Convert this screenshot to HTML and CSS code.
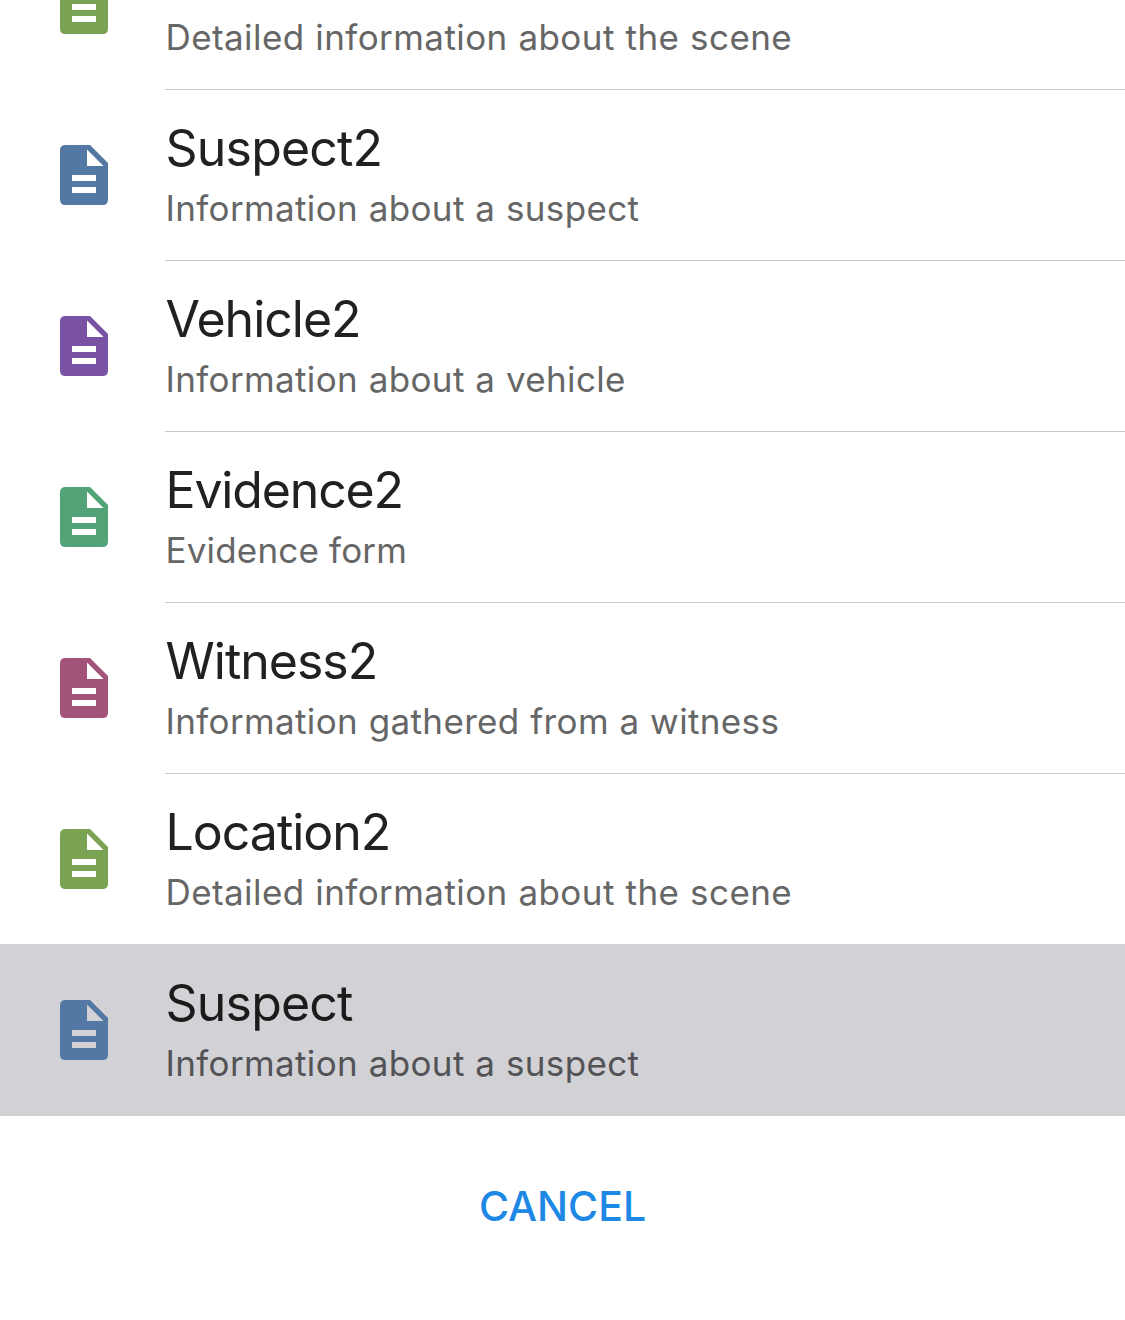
FILE: index.html
```html
<!DOCTYPE html>
<html lang="en">
<head>
<meta charset="utf-8">
<title>Forms</title>
<link rel="stylesheet" href="styles.css">
</head>
<body>
<svg class="defs" aria-hidden="true"><symbol id="doc" viewBox="0 0 48 60"><path fill-rule="evenodd" d="M5.500 0H30L48 18V54.500Q48 60 42.500 60H5.500Q0 60 0 54.500V5.500Q0 0 5.500 0ZM27 4.500V21H43.500ZM12 30V36H36V30ZM12 42V48H36V42Z"/></symbol></svg>
<main class="sheet">
<ul class="list">
<li class="row green partial"><svg class="icon"><use href="#doc"/></svg><div class="text"><p class="detail scene">Detailed information about the scene</p></div></li>
<li class="row blue"><svg class="icon"><use href="#doc"/></svg><div class="text"><h2 class="title wide">Suspect2</h2><p class="detail">Information about a suspect</p></div></li>
<li class="row purple"><svg class="icon"><use href="#doc"/></svg><div class="text"><h2 class="title">Vehicle2</h2><p class="detail">Information about a vehicle</p></div></li>
<li class="row teal"><svg class="icon"><use href="#doc"/></svg><div class="text"><h2 class="title tight">Evidence2</h2><p class="detail short">Evidence form</p></div></li>
<li class="row rose"><svg class="icon"><use href="#doc"/></svg><div class="text"><h2 class="title">Witness2</h2><p class="detail">Information gathered from a witness</p></div></li>
<li class="row green before-selected"><svg class="icon"><use href="#doc"/></svg><div class="text"><h2 class="title">Location2</h2><p class="detail scene">Detailed information about the scene</p></div></li>
<li class="row blue selected"><svg class="icon"><use href="#doc"/></svg><div class="text"><h2 class="title wide">Suspect</h2><p class="detail">Information about a suspect</p></div></li>
</ul>
<button class="cancel">CANCEL</button>
</main>
</body>
</html>
```
FILE: styles.css
```css
* { box-sizing: border-box; }
body { margin: 0; background: #fff; font-family: Inter, sans-serif; }
.defs { display: none; }
.sheet { height: 1320px; overflow: hidden; display: flex; flex-direction: column; }
.list { list-style: none; margin: 0; padding: 0; }
.row { height: 171px; display: flex; align-items: stretch; }
.icon { width: 48px; height: 60px; margin: 55px 57px 0 60px; flex: none; fill: currentColor; }
.text { flex: 1; border-bottom: 1px solid #c8c7cc; padding: 28px 0 0 0.5px; }
.title { margin: 0; font-size: 50px; line-height: 60px; font-weight: 400; letter-spacing: -1px; color: #212121; white-space: nowrap; }
.wide { letter-spacing: -0.8px; }
.tight { letter-spacing: -1.15px; }
.detail { margin: 8px 0 0; font-size: 35px; line-height: 44px; color: #666; letter-spacing: 0.36px; word-spacing: 0.4px; white-space: nowrap; }
.scene { letter-spacing: 0.42px; word-spacing: 0.5px; }
.short { letter-spacing: 0.18px; word-spacing: 0; }
.partial { height: 90px; }
.partial .icon { margin-top: -26px; }
.partial .text { padding-top: 7px; }
.partial .detail { margin-top: 8px; }
.blue { color: #5278a3; }
.purple { color: #7952a3; }
.teal { color: #52a378; }
.rose { color: #a35278; }
.green { color: #79a352; }
.before-selected { height: 170px; }
.selected { height: 172px; background: #d1d1d6; }
.selected .icon { margin-top: 56px; }
.selected .text { padding-top: 29px; }
.selected .text, .before-selected .text { border-bottom: 0; }
.selected .title { color: #1b1b1c; }
.selected .detail { color: #535356; }
.cancel { align-self: center; margin-top: 60px; padding: 0; border: 0; background: none; font: 500 41px/60px Inter, sans-serif; color: #1e88e5; }
```
